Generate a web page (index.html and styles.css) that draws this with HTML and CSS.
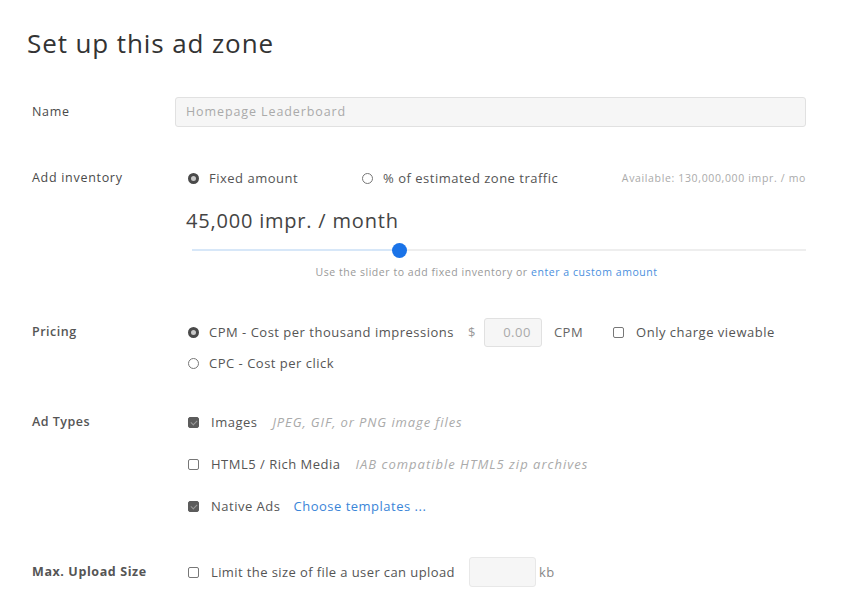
FILE: index.html
```html
<!DOCTYPE html>
<html>
<head>
<meta charset="utf-8">
<link rel="stylesheet" href="styles.css">
</head>
<body>
<div class="page">
  <h1 class="title">Set up this ad zone</h1>

  <div class="row row-name">
    <div class="label">Name</div>
    <div class="content">
      <div class="text-input">Homepage Leaderboard</div>
    </div>
  </div>

  <div class="row row-inv">
    <div class="label">Add inventory</div>
    <div class="content">
      <div class="line inv-line">
        <span class="opt"><span class="radio on"></span>Fixed amount</span>
        <span class="opt opt-pct"><span class="radio"></span>% of estimated zone traffic</span>
        <span class="avail">Available: 130,000,000 impr. / mo</span>
      </div>
      <div class="amount">45,000 impr. / month</div>
      <div class="slider">
        <div class="track-fill" style="width: 207px"></div>
        <div class="thumb"></div>
      </div>
      <div class="hint">Use the slider to add fixed inventory or <span class="link">enter a custom amount</span></div>
    </div>
  </div>

  <div class="row row-pricing">
    <div class="label label-med">Pricing</div>
    <div class="content">
      <div class="line line-tall">
        <span class="opt"><span class="radio on"></span>CPM - Cost per thousand impressions</span>
        <span class="dollar">$</span>
        <span class="small-input">0.00</span>
        <span class="unit">CPM</span>
        <span class="opt opt-view"><span class="check"></span>Only charge viewable</span>
      </div>
      <div class="line line-cpc">
        <span class="opt"><span class="radio"></span>CPC - Cost per click</span>
      </div>
    </div>
  </div>

  <div class="row row-types">
    <div class="label label-med">Ad Types</div>
    <div class="content">
      <div class="line">
        <span class="opt"><span class="check on"></span>Images</span>
        <span class="desc">JPEG, GIF, or PNG image files</span>
      </div>
      <div class="line line-gap">
        <span class="opt"><span class="check"></span>HTML5 / Rich Media</span>
        <span class="desc">IAB compatible HTML5 zip archives</span>
      </div>
      <div class="line line-gap">
        <span class="opt"><span class="check on"></span>Native Ads</span>
        <span class="link link-tpl">Choose templates ...</span>
      </div>
    </div>
  </div>

  <div class="row row-max">
    <div class="label label-bold">Max. Upload Size</div>
    <div class="content">
      <div class="line line-tall">
        <span class="opt opt-limit"><span class="check"></span>Limit the size of file a user can upload</span>
        <span class="kb-input"></span>
        <span class="kb">kb</span>
      </div>
    </div>
  </div>
</div>
</body>
</html>
```

FILE: styles.css
```css
* { box-sizing: border-box; }
html, body { margin: 0; padding: 0; background: #fff; }
body {
  font-family: "Open Sans", "Liberation Sans", sans-serif;
  color: #555;
  width: 848px;
  height: 610px;
  overflow: hidden;
}
.page {
  padding: 27px 42px 0 27px;
}
.title {
  margin: 0;
  font-size: 26px;
  line-height: 32px;
  font-weight: 400;
  color: #333;
  letter-spacing: 0.9px;
}
.row {
  display: grid;
  grid-template-columns: 143px 1fr;
  padding-left: 5px;
}
.label {
  font-size: 12.5px;
  line-height: 20px;
  color: #4a4a4a;
  letter-spacing: 0.7px;
  white-space: nowrap;
}
.label-med { font-weight: 600; color: #555; letter-spacing: 0.5px; }
.label-bold { font-weight: 700; color: #555; letter-spacing: 0.6px; }
.row-name { margin-top: 38px; }
.row-name .label { line-height: 30px; }
.text-input {
  height: 30px;
  background: #f6f6f6;
  border: 1px solid #e1e1e1;
  border-radius: 3px;
  font-size: 12.5px;
  letter-spacing: 0.9px;
  line-height: 28px;
  padding-left: 10px;
  color: #aaa;
}
.line {
  display: flex;
  align-items: center;
  height: 20px;
  padding-left: 13px;
  font-size: 13px;
  letter-spacing: 0.5px;
  color: #555;
}
.line-tall { height: 30px; }
.opt { display: inline-flex; align-items: center; white-space: nowrap; }
.opt-limit { letter-spacing: 0.4px; }
.radio {
  width: 11px; height: 11px;
  border-radius: 50%;
  border: 1px solid #777;
  margin-right: 10px;
  flex: none;
}
.radio.on {
  border: 3px solid #4a4a4a;
  background: #c9c9c9;
}
.check {
  width: 11px; height: 11px;
  border-radius: 2px;
  border: 1px solid #777;
  margin-right: 12px;
  flex: none;
  position: relative;
}
.check.on {
  background: #5c5c5c;
  border-color: #5c5c5c;
}
.check.on::after {
  content: "";
  position: absolute;
  left: 3px; top: 1px;
  width: 3px; height: 5px;
  border: solid #9a9a9a;
  border-width: 0 1px 1px 0;
  transform: rotate(45deg);
}
.row-inv { margin-top: 41px; }
.opt-pct { margin-left: 64px; }
.avail {
  margin-left: auto;
  font-size: 10.5px;
  letter-spacing: 0.65px;
  color: #aaa;
  white-space: nowrap;
}
.amount {
  margin-top: 20px;
  padding-left: 11px;
  font-size: 20px;
  letter-spacing: 0.8px;
  line-height: 26px;
  color: #444;
}
.slider {
  margin: 8px 0 0 17px;
  height: 16px;
  position: relative;
  display: flex;
  align-items: center;
  background: linear-gradient(#eeeeee, #eeeeee) no-repeat 0 50% / 100% 2px;
}
.track-fill {
  height: 2px;
  background: #d7e7f8;
}
.thumb {
  width: 15px; height: 15px;
  border-radius: 50%;
  background: #1a73e8;
  margin-left: -7px;
}
.hint {
  margin-top: 7px;
  padding-right: 8px;
  text-align: center;
  font-size: 10.5px;
  letter-spacing: 0.55px;
  line-height: 14px;
  color: #999;
  white-space: nowrap;
}
.link { color: #3a85d8; }
.hint .link { color: #4a8fde; }
.row-pricing { margin-top: 38px; }
.row-pricing .label { line-height: 30px; }
.dollar { margin-left: 14px; color: #999; }
.small-input {
  margin-left: 8px;
  width: 58px; height: 29px;
  background: #f6f6f6;
  border: 1px solid #e1e1e1;
  border-radius: 3px;
  text-align: right;
  padding-right: 10px;
  line-height: 27px;
  color: #aaa;
}
.unit { margin-left: 12px; color: #666; }
.opt-view { margin-left: 30px; }
.line-cpc { margin-top: 6px; }
.row-types { margin-top: 39px; }
.line-gap { margin-top: 22px; }
.desc {
  margin-left: 15px;
  font-style: italic;
  letter-spacing: 0.9px;
  color: #aaa;
}
.line-gap .desc { letter-spacing: 1px; }
.link-tpl { margin-left: 13px; }
.row-max { margin-top: 41px; }
.row-max .label { line-height: 30px; }
.kb-input {
  margin-left: 14px;
  width: 67px; height: 30px;
  background: #f6f6f6;
  border: 1px solid #e8e8e8;
  border-radius: 3px;
}
.kb { margin-left: 3px; color: #888; }
```
